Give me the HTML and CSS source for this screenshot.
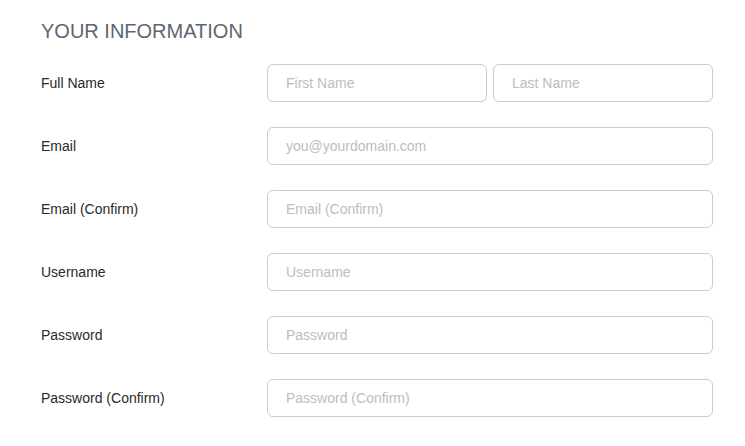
FILE: index.html
```html
<!DOCTYPE html>
<html>
<head>
<meta charset="utf-8">
<link rel="stylesheet" href="styles.css">
</head>
<body>
<div class="form">
  <h2 class="title">YOUR INFORMATION</h2>
  <div class="row">
    <label class="label">Full Name</label>
    <div class="fields two">
      <input class="input" placeholder="First Name">
      <input class="input" placeholder="Last Name">
    </div>
  </div>
  <div class="row">
    <label class="label">Email</label>
    <div class="fields"><input class="input" placeholder="you@yourdomain.com"></div>
  </div>
  <div class="row">
    <label class="label">Email (Confirm)</label>
    <div class="fields"><input class="input" placeholder="Email (Confirm)"></div>
  </div>
  <div class="row">
    <label class="label">Username</label>
    <div class="fields"><input class="input" placeholder="Username"></div>
  </div>
  <div class="row">
    <label class="label">Password</label>
    <div class="fields"><input class="input" type="password" placeholder="Password"></div>
  </div>
  <div class="row">
    <label class="label">Password (Confirm)</label>
    <div class="fields"><input class="input" type="password" placeholder="Password (Confirm)"></div>
  </div>
</div>
</body>
</html>
```
FILE: styles.css
```css
html, body {
  margin: 0;
  padding: 0;
  background: #fff;
}
body {
  font-family: "Liberation Sans", Arial, sans-serif;
}
.form {
  padding: 20px 0 0 41px;
  width: 672px;
  display: flex;
  flex-direction: column;
  gap: 25px;
}
.title {
  margin: 0 0 -4px 0;
  font-size: 20px;
  font-weight: normal;
  color: #5d6670;
  line-height: 23px;
}
.row {
  display: flex;
  align-items: center;
}
.label {
  width: 226px;
  font-size: 14px;
  color: #2a2a2a;
}
.fields {
  flex: 1;
  display: flex;
  gap: 6px;
}
.input {
  flex: 1;
  min-width: 0;
  box-sizing: border-box;
  height: 38px;
  border: 1px solid #cccccc;
  border-radius: 6px;
  padding: 0 18px;
  font-family: "Liberation Sans", Arial, sans-serif;
  font-size: 14px;
  color: #333;
  background: #fff;
  outline: none;
}
.input::placeholder {
  color: #bdbdbd;
}
```
